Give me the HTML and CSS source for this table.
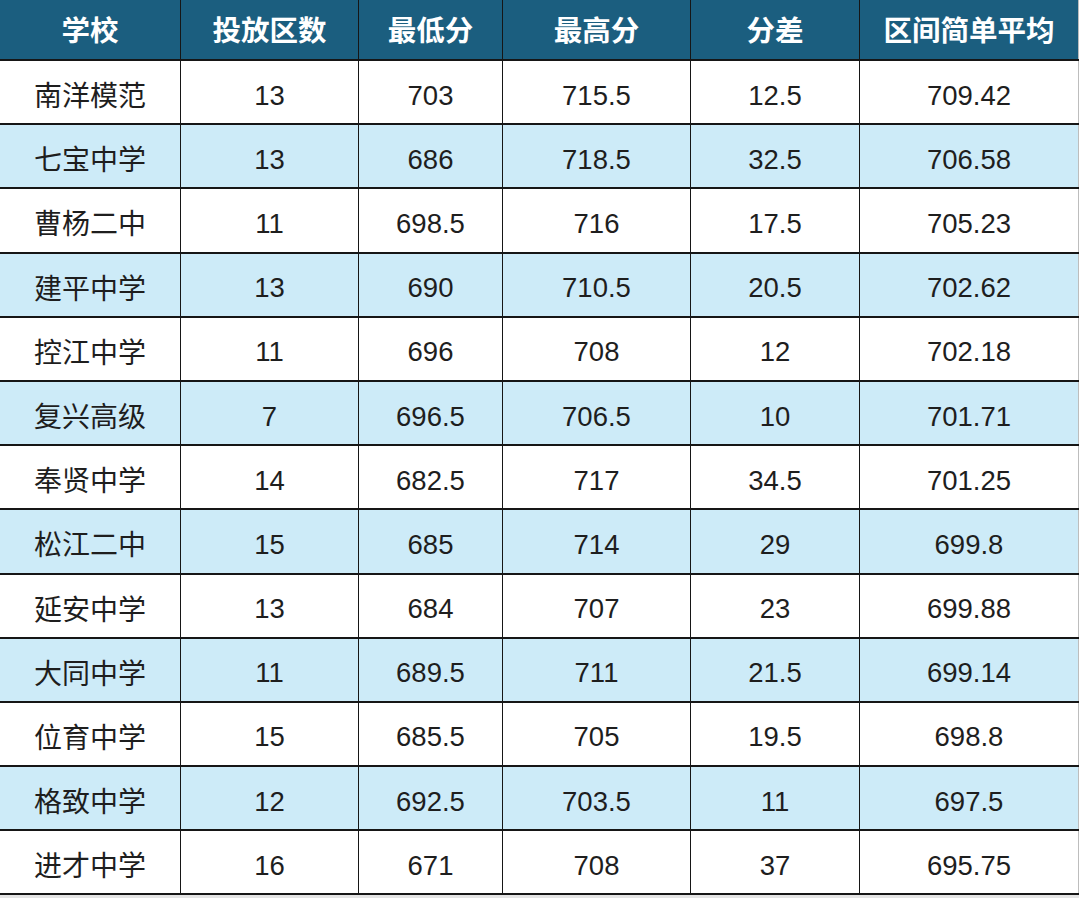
FILE: index.html
```html
<!DOCTYPE html>
<html lang="zh-CN">
<head>
<meta charset="utf-8">
<title>学校分数</title>
<link rel="stylesheet" href="styles.css">
</head>
<body>
<div class="table">
  <div class="row head">
    <div class="cell">学校</div><div class="cell">投放区数</div><div class="cell">最低分</div><div class="cell">最高分</div><div class="cell">分差</div><div class="cell">区间简单平均</div>
  </div>
  <div class="row"><div class="cell name">南洋模范</div><div class="cell">13</div><div class="cell">703</div><div class="cell">715.5</div><div class="cell">12.5</div><div class="cell">709.42</div></div>
  <div class="row alt"><div class="cell name">七宝中学</div><div class="cell">13</div><div class="cell">686</div><div class="cell">718.5</div><div class="cell">32.5</div><div class="cell">706.58</div></div>
  <div class="row"><div class="cell name">曹杨二中</div><div class="cell">11</div><div class="cell">698.5</div><div class="cell">716</div><div class="cell">17.5</div><div class="cell">705.23</div></div>
  <div class="row alt"><div class="cell name">建平中学</div><div class="cell">13</div><div class="cell">690</div><div class="cell">710.5</div><div class="cell">20.5</div><div class="cell">702.62</div></div>
  <div class="row"><div class="cell name">控江中学</div><div class="cell">11</div><div class="cell">696</div><div class="cell">708</div><div class="cell">12</div><div class="cell">702.18</div></div>
  <div class="row alt"><div class="cell name">复兴高级</div><div class="cell">7</div><div class="cell">696.5</div><div class="cell">706.5</div><div class="cell">10</div><div class="cell">701.71</div></div>
  <div class="row"><div class="cell name">奉贤中学</div><div class="cell">14</div><div class="cell">682.5</div><div class="cell">717</div><div class="cell">34.5</div><div class="cell">701.25</div></div>
  <div class="row alt"><div class="cell name">松江二中</div><div class="cell">15</div><div class="cell">685</div><div class="cell">714</div><div class="cell">29</div><div class="cell">699.8</div></div>
  <div class="row"><div class="cell name">延安中学</div><div class="cell">13</div><div class="cell">684</div><div class="cell">707</div><div class="cell">23</div><div class="cell">699.88</div></div>
  <div class="row alt"><div class="cell name">大同中学</div><div class="cell">11</div><div class="cell">689.5</div><div class="cell">711</div><div class="cell">21.5</div><div class="cell">699.14</div></div>
  <div class="row"><div class="cell name">位育中学</div><div class="cell">15</div><div class="cell">685.5</div><div class="cell">705</div><div class="cell">19.5</div><div class="cell">698.8</div></div>
  <div class="row alt"><div class="cell name">格致中学</div><div class="cell">12</div><div class="cell">692.5</div><div class="cell">703.5</div><div class="cell">11</div><div class="cell">697.5</div></div>
  <div class="row"><div class="cell name">进才中学</div><div class="cell">16</div><div class="cell">671</div><div class="cell">708</div><div class="cell">37</div><div class="cell">695.75</div></div>
</div>
</body>
</html>
```
FILE: styles.css
```css
html, body {
  margin: 0;
  padding: 0;
  background: #e4e4e4;
}
.table {
  width: 1079px;
  background: #ffffff;
  font-family: "Liberation Sans", "Noto Sans CJK SC", sans-serif;
  color: #1e1e1e;
}
.row {
  display: grid;
  grid-template-columns: 181px 178px 144px 188px 169px 1fr;
  height: 64.2px;
  box-sizing: border-box;
  border-bottom: 2px solid #161616;
  background: #ffffff;
}
.row.alt {
  background: #cdebf8;
}
.row.head {
  height: 61px;
  background: #1b5e7f;
  color: #ffffff;
  font-weight: bold;
  font-size: 28.5px;
}
.cell {
  display: flex;
  align-items: center;
  justify-content: center;
  border-right: 1.5px solid #161616;
  font-size: 27.5px;
  padding-top: 7px;
  box-sizing: border-box;
}
.row.head .cell {
  font-size: 28.5px;
  padding-top: 0;
  padding-bottom: 2px;
}
.cell:last-child {
  border-right: 1px solid #bdbdbd;
}
.cell.name {
  font-size: 28px;
  padding-top: 4px;
}
```
